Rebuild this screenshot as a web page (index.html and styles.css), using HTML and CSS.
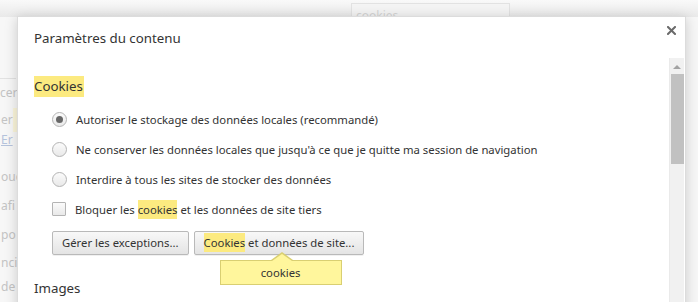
FILE: index.html
```html
<!DOCTYPE html>
<html lang="fr">
<head>
<meta charset="utf-8">
<title>Paramètres du contenu</title>
<link rel="stylesheet" href="styles.css">
</head>
<body>
<div class="page">
  <div class="topbar">
    <div class="search"><span class="search-text">cookies</span></div>
  </div>
  <div class="side">
    <div class="side-input">cer</div>
    <div class="side-line hl">er</div>
    <div class="side-line link">Er</div>
    <div class="side-line s4">ouc</div>
    <div class="side-line s5">afi</div>
    <div class="side-line s6">po</div>
    <div class="side-line s7">ncid</div>
    <div class="side-line s8">de</div>
  </div>
</div>

<div class="dialog">
  <div class="dlg-head">
    <h1 class="dlg-title">Paramètres du contenu</h1>
    <button class="close" aria-label="Fermer">
      <svg width="9" height="9" viewBox="0 0 9 9"><path d="M1 1 L8 8 M8 1 L1 8" stroke="#6a6a6a" stroke-width="2" stroke-linecap="square"/></svg>
    </button>
  </div>
  <div class="dlg-body">
    <div class="content">
      <h2 class="section"><mark class="mk">Cookies</mark></h2>
      <ul class="options">
        <li class="opt"><span class="radio checked"></span><span class="label">Autoriser le stockage des données locales (recommandé)</span></li>
        <li class="opt"><span class="radio"></span><span class="label">Ne conserver les données locales que jusqu'à ce que je quitte ma session de navigation</span></li>
        <li class="opt"><span class="radio"></span><span class="label">Interdire à tous les sites de stocker des données</span></li>
        <li class="opt"><span class="check"></span><span class="label">Bloquer les <mark class="mk">cookies</mark> et les données de site tiers</span></li>
      </ul>
      <div class="buttons">
        <button class="btn">Gérer les exceptions...</button>
        <div class="btn-wrap">
          <button class="btn"><mark class="mk">Cookies</mark> et données de site...</button>
          <div class="bubble">cookies</div>
        </div>
      </div>
      <h2 class="section images">Images</h2>
    </div>
    <div class="scrollbar">
      <div class="arrow"></div>
      <div class="thumb"></div>
    </div>
  </div>
</div>
</body>
</html>
```
FILE: styles.css
```css
* { box-sizing: border-box; }
html, body { margin: 0; padding: 0; }
body {
  width: 698px;
  height: 302px;
  overflow: hidden;
  position: relative;
  font-family: "Noto Sans", "Open Sans", sans-serif;
  font-size: 11.3px;
  color: #333;
  background: #f7f7f7;
}

.page { width: 698px; height: 302px; }
.topbar {
  height: 17px;
  background: linear-gradient(#f9f9f9, #e9e9e9);
  position: relative;
}
.search {
  position: absolute;
  left: 351px;
  top: 3px;
  width: 159px;
  height: 20px;
  border: 1px solid #e2e2e2;
  background: #f4f4f4;
  padding: 3px 0 0 4px;
}
.search-text { color: #d4d4d4; font-size: 12px; }

.side {
  width: 60px;
  color: #c4c4c4;
  font-size: 12px;
  white-space: nowrap;
  padding-top: 61px;
}
.side-input {
  border-top: 1px solid #e2e2e2;
  width: 16px;
  height: 24px;
  padding-top: 4px;
  line-height: 20px;
}
.side-line { height: 20px; line-height: 20px; padding-left: 1px; }
.side-line.hl {
  height: 24px;
  line-height: 24px;
  margin-top: 6px;
  background: linear-gradient(90deg, transparent 13px, #fbf6da 13px);
}
.side-line.link { color: #b5c3dc; text-decoration: underline; margin-top: -2px; }
.side-line.s4 { margin-top: 17px; }
.side-line.s5 { margin-top: 9px; }
.side-line.s6 { margin-top: 9px; }
.side-line.s7 { margin-top: 8px; }
.side-line.s8 { margin-top: 4px; }

.dialog {
  position: absolute;
  left: 17px;
  top: 16px;
  width: 669px;
  height: 300px;
  background: #fff;
  border: 1px solid #dcdcdc;
  border-bottom: none;
  box-shadow: 0 2px 12px rgba(0, 0, 0, 0.18);
  display: flex;
  flex-direction: column;
}
.dlg-head {
  height: 41px;
  display: flex;
  align-items: flex-start;
  justify-content: space-between;
  padding: 12px 8px 0 16px;
  flex: none;
}
.dlg-title {
  margin: 0;
  font-size: 13.3px;
  font-weight: normal;
  color: #333;
  line-height: 18px;
}
.close {
  border: 0;
  background: none;
  padding: 0;
  margin-top: -3px;
  margin-right: 1px;
  width: 9px;
  height: 9px;
  display: flex;
}

.dlg-body {
  flex: 1;
  display: flex;
  min-height: 0;
}
.content {
  flex: 1;
  padding: 18px 0 0 16px;
}
.mk {
  background: #fcea80;
  color: inherit;
  padding: 0;
}
.section {
  margin: 0;
  font-size: 13.3px;
  font-weight: normal;
  line-height: 21px;
}
.section .mk { display: inline-block; padding: 0 1px 0 0; }
.options {
  list-style: none;
  margin: 7px 0 0 0;
  padding: 0 0 0 18px;
}
.opt {
  height: 30px;
  display: flex;
  align-items: center;
  gap: 9px;
  white-space: nowrap;
}
.opt .mk { padding: 2px 0; }
.radio {
  width: 15px;
  height: 15px;
  border-radius: 50%;
  border: 1px solid #b4b4b4;
  background: linear-gradient(#fbfbfb, #e9e9e9);
  display: flex;
  align-items: center;
  justify-content: center;
  flex: none;
}
.radio.checked::after {
  content: "";
  width: 7px;
  height: 7px;
  border-radius: 50%;
  background: #676767;
}
.check {
  width: 14px;
  height: 14px;
  border: 1px solid #b4b4b4;
  border-radius: 1px;
  background: linear-gradient(#fbfbfb, #e9e9e9);
  flex: none;
}

.buttons {
  display: flex;
  gap: 5px;
  padding-left: 18px;
  margin-top: 7px;
}
.btn-wrap { position: relative; }
.btn {
  font-family: inherit;
  font-size: 11.3px;
  color: #333;
  height: 24px;
  padding: 0 9px;
  border: 1px solid #b9b9b9;
  border-radius: 2px;
  background: linear-gradient(#f8f8f8, #e4e4e4);
  box-shadow: 0 1px 0 rgba(0,0,0,0.06);
  white-space: nowrap;
  line-height: 20px;
}
.btn .mk { padding: 2px 0; }
.bubble {
  position: absolute;
  left: 26px;
  top: 29px;
  width: 122px;
  height: 25px;
  background: #fff69c;
  border: 1px solid #d9cf72;
  text-align: center;
  line-height: 23px;
  font-size: 11.3px;
  color: #333;
}
.bubble::before,
.bubble::after {
  content: "";
  position: absolute;
  border-style: solid;
  border-color: transparent;
}
.bubble::before {
  top: -9px;
  left: 50px;
  border-width: 0 11px 8px 11px;
  border-bottom-color: #d9cf72;
}
.bubble::after {
  top: -7px;
  left: 51px;
  border-width: 0 10px 7px 10px;
  border-bottom-color: #fff69c;
}
.images { margin-top: 23px; }

.scrollbar {
  width: 15px;
  margin-right: 1px;
  background: #f1f1f1;
  border-left: 1px solid #eaeaea;
  flex: none;
  display: flex;
  flex-direction: column;
  align-items: center;
}
.arrow {
  margin-top: 7px;
  width: 0;
  height: 0;
  border-left: 4px solid transparent;
  border-right: 4px solid transparent;
  border-bottom: 4px solid #a3a3a3;
}
.thumb {
  margin-top: 5px;
  width: 13px;
  height: 90px;
  background: #c1c1c1;
}
```
